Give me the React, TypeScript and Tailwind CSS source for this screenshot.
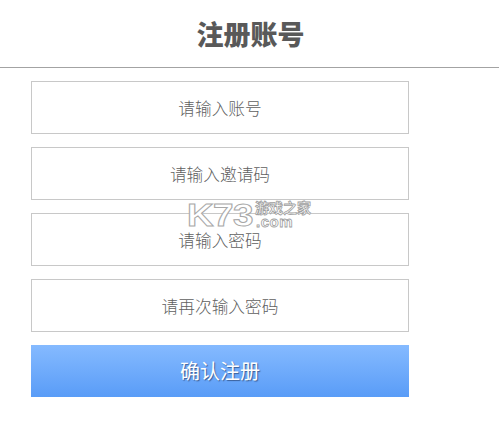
const fields = ["请输入账号", "请输入邀请码", "请输入密码", "请再次输入密码"]

const font = "font-['Noto_Sans_CJK_SC','Liberation_Sans',sans-serif]"

const App = () => {
    return (
        <div className={`relative min-h-[428px] w-[499px] overflow-hidden bg-white ${font}`}>
            <header className="flex h-[68px] items-center justify-center border-b border-[#a3a3a3] pl-[2px]">
                <h1 className="text-[27px] leading-none font-black text-[#595959]">注册账号</h1>
            </header>
            <form className="ml-[31px] flex w-[378px] flex-col gap-[13px] pt-[13px]">
                {fields.map(field => (
                    <input
                        key={field}
                        placeholder={field}
                        className="h-[53px] w-full border border-[#c8c8c8] bg-white text-center text-[16.7px] font-light outline-none placeholder:text-[#5f5f5f]"
                    />
                ))}
                <button
                    type="button"
                    className="h-[52px] w-full bg-gradient-to-b from-[#85baff] to-[#599cf7] text-[20px] text-white [text-shadow:1px_1px_1px_#3a5f99]"
                >
                    确认注册
                </button>
            </form>
            {/* watermark */}
            <div className="pointer-events-none absolute top-[197px] left-[187px] flex items-start">
                <span className="w-[68px] origin-left scale-x-[1.15] font-['Liberation_Sans',sans-serif] text-[32px] leading-[36px] font-bold tracking-[-0.5px] text-white [-webkit-text-stroke:1px_#a8a8a8]">
                    K73
                </span>
                <div className="flex flex-col pt-[3px]">
                    <span className="text-[14px] leading-[15px] font-bold text-white [-webkit-text-stroke:0.8px_#a0a0a0]">游戏之家</span>
                    <span className="pl-[1px] font-['Liberation_Sans',sans-serif] text-[15px] leading-[13px] font-bold tracking-[0.5px] text-white [-webkit-text-stroke:0.8px_#a0a0a0]">.com</span>
                </div>
            </div>
        </div>
    )
}

export default App
